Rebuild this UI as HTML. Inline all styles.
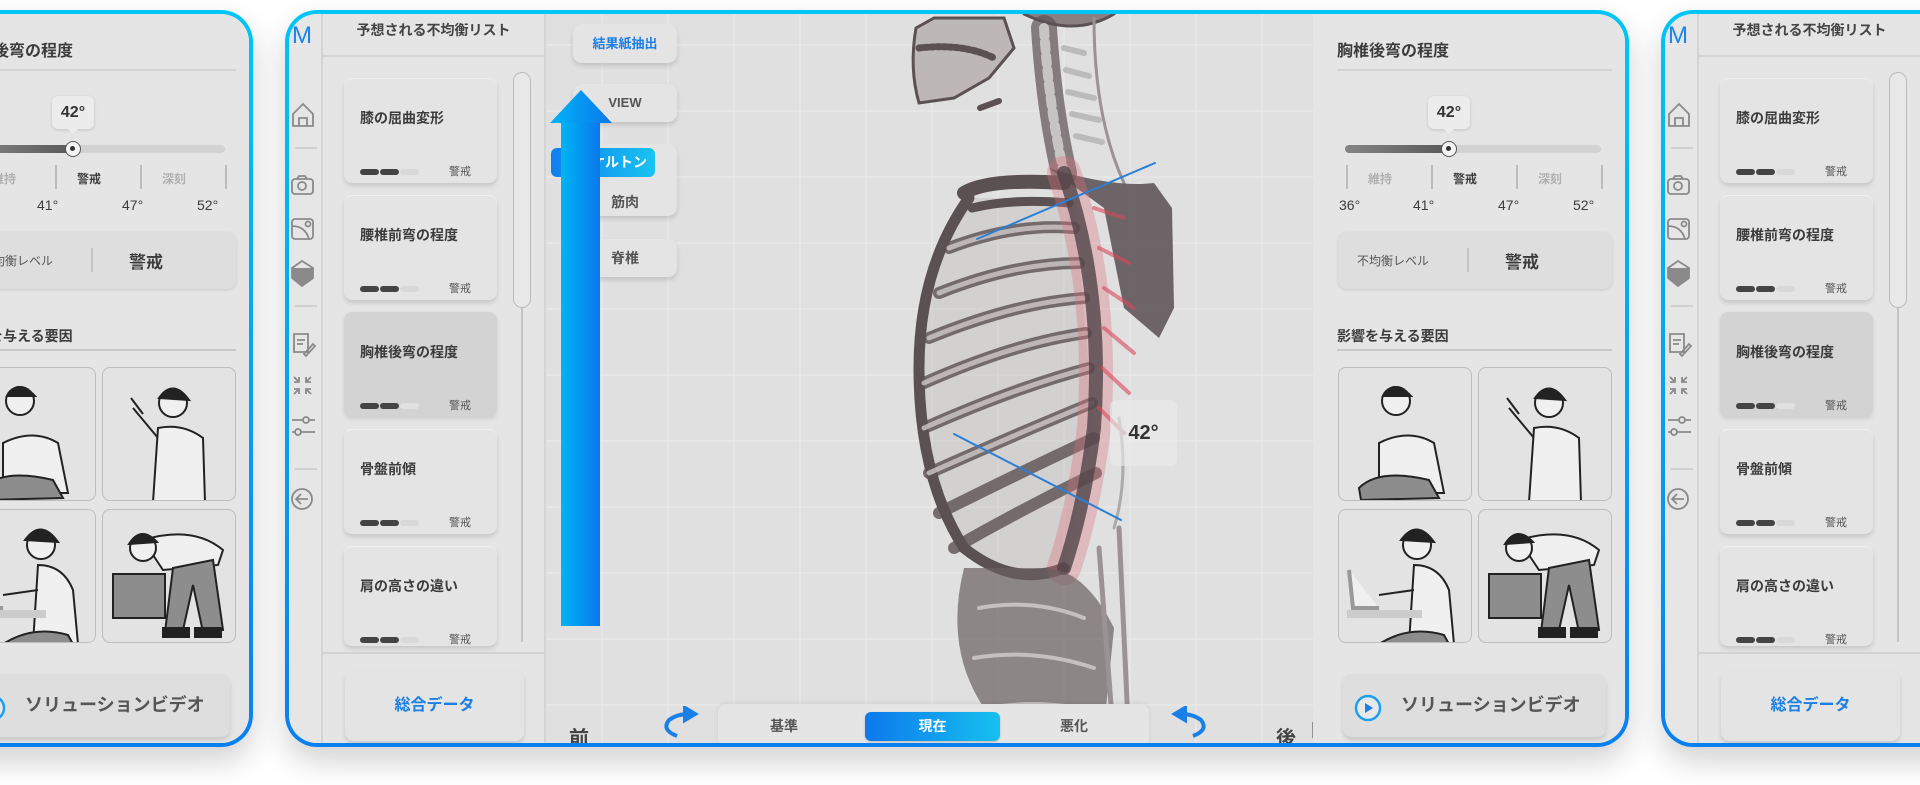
<!DOCTYPE html>
<html><head><meta charset="utf-8">
<style>
*{box-sizing:border-box;margin:0;padding:0}
html,body{width:1920px;height:785px;overflow:hidden;background:#fff;font-family:"Liberation Sans","Noto Sans CJK JP",sans-serif;color:#3a3a3a}
.pw{position:absolute;top:10px;width:1344px;height:737px;border-radius:32px;background:linear-gradient(180deg,#00c6f6,#0a7ff0);box-shadow:0 14px 30px rgba(0,0,0,.18)}
.pi{position:absolute;left:4px;top:4px;right:4px;bottom:4px;border-radius:28px;overflow:hidden;background:#e3e3e3}
.a{position:absolute}
.nav{left:0;top:0;width:34px;height:100%;background:#e6e6e6;border-right:2px solid #d4d4d4}
.list{left:34px;top:0;width:223px;height:100%;background:#e5e5e5;border-right:2px solid #d4d4d4}
.canvas{left:257px;top:0;width:767px;height:100%;background-color:#e0e0e0;
background-image:linear-gradient(90deg,rgba(232,232,232,.7) 2px,transparent 2px),linear-gradient(180deg,rgba(232,232,232,.7) 2px,transparent 2px);background-size:66px 66px;background-position:-11px 30px}
.side{left:1024px;top:0;width:320px;height:100%;background:#e5e5e5}
.card{position:absolute;left:21px;width:153px;height:105px;border-radius:8px;background:#e4e4e4;box-shadow:0 3px 5px rgba(0,0,0,.13),inset 0 1px 0 #efefef}
.card.sel{background:#d3d3d3;box-shadow:0 2px 4px rgba(0,0,0,.1)}
.card b{position:absolute;left:16px;top:30px;font-size:14px;font-weight:bold;color:#3c3c3c;white-space:nowrap}
.pill{position:absolute;height:6px;width:19px;border-radius:3px;background:#444;top:91px}
.card .st{position:absolute;right:26px;top:85px;font-size:11px;color:#555}
.btn{position:absolute;border-radius:9px;background:#e4e4e4;box-shadow:0 3px 5px rgba(0,0,0,.13);text-align:center;font-weight:bold}
.tx{position:absolute;white-space:nowrap}
.cell{position:absolute;width:134px;height:134px;border:1.5px solid #bdbdbd;border-radius:8px;background:#e3e3e3;overflow:hidden}
</style></head><body>

<div id="p" class="pw" style="left:285px"><div class="pi">
 <div class="a nav">
  <div class="tx" style="left:3px;top:8px;font-size:24px;color:#1a86e8;font-weight:normal;letter-spacing:-2px">M</div>
  <svg class="a" style="left:0;top:0" width="34" height="700" fill="none" stroke="#8a8a8a" stroke-width="1.8">
   <path d="M4 100 L14 90 L24 100 V112 H4 Z M10 112 V104 H18 V112"/>
   <line x1="6" y1="134" x2="28" y2="134" stroke="#ccc"/>
   <rect x="3" y="165" width="21" height="15" rx="3"/><circle cx="13" cy="172" r="4"/><path d="M8 165 l2 -3 h6 l2 3"/>
   <rect x="3" y="205" width="21" height="20" rx="3"/><path d="M3 212 Q16 212 20 225"/><circle cx="19" cy="210" r="2.5"/>
   <path d="M3 254 L13 247 L24 254 L13 262 Z"/><path d="M3 254 V264 L13 272 L24 264 V254" fill="#8a8a8a"/>
   <line x1="6" y1="292" x2="28" y2="292" stroke="#ccc"/>
   <path d="M5 320 H19 V338 H5 Z M8 326 H16 M8 330 H14 M15 340 L24 330 L26 332 L17 342 Z"/>
   <path d="M5 363 L10 368 M10 363 V368 H5 M22 363 L17 368 M17 363 V368 H22 M5 380 L10 375 M10 380 V375 H5 M22 380 L17 375 M17 380 V375 H22"/>
   <path d="M3 406 H26 M3 418 H26"/><circle cx="17" cy="406" r="3" fill="#e6e6e6"/><circle cx="9" cy="418" r="3" fill="#e6e6e6"/>
   <line x1="6" y1="455" x2="28" y2="455" stroke="#ccc"/>
   <circle cx="13" cy="485" r="10"/><path d="M19 485 H8 M12 480 L7 485 L12 490"/>
  </svg>
 </div>
 <div class="a list">
  <div class="tx" style="left:0;width:221px;text-align:center;top:6px;font-size:14px;font-weight:bold;color:#444">予想される不均衡リスト</div>
  <div class="a" style="left:0;top:41px;width:221px;height:2px;background:#d2d2d2"></div>
  <div class="card" style="top:64px"><b>膝の屈曲変形</b><i class="pill" style="left:16px"></i><i class="pill" style="left:36px"></i><i class="pill" style="left:56px;background:#d8d8d8"></i><span class="st">警戒</span></div>
  <div class="card" style="top:181px"><b>腰椎前弯の程度</b><i class="pill" style="left:16px"></i><i class="pill" style="left:36px"></i><i class="pill" style="left:56px;background:#d8d8d8"></i><span class="st">警戒</span></div>
  <div class="card sel" style="top:298px"><b>胸椎後弯の程度</b><i class="pill" style="left:16px"></i><i class="pill" style="left:36px"></i><i class="pill" style="left:56px;background:#e0e0e0"></i><span class="st">警戒</span></div>
  <div class="card" style="top:415px"><b>骨盤前傾</b><i class="pill" style="left:16px"></i><i class="pill" style="left:36px"></i><i class="pill" style="left:56px;background:#d8d8d8"></i><span class="st">警戒</span></div>
  <div class="card" style="top:532px;height:100px"><b>肩の高さの違い</b><i class="pill" style="left:16px"></i><i class="pill" style="left:36px"></i><i class="pill" style="left:56px;background:#d8d8d8"></i><span class="st">警戒</span></div>
  <div class="a" style="left:190px;top:58px;width:18px;height:236px;border:1.5px solid #bcbcbc;border-radius:9px;background:#e8e8e8"></div>
  <div class="a" style="left:198px;top:294px;width:2px;height:334px;background:#c4c4c4"></div>
  <div class="a" style="left:0;top:638px;width:221px;height:2px;background:#d2d2d2"></div>
  <div class="btn" style="left:22px;top:657px;width:179px;height:70px;line-height:70px;font-size:16px;color:#1a7fe6">総合データ</div>
 </div>
 <div class="a canvas">
  <svg class="a" style="left:0;top:0" width="767" height="730" viewBox="542 6 767 730">
   <g stroke-linecap="round" fill="none">
    <path d="M1020 6 Q1070 30 1110 6" fill="#8a8082" stroke="#5b5052" stroke-width="3"/>
    <path d="M912 20 L930 10 L1000 10 L1010 40 L985 70 L950 90 L915 95 Q905 60 912 20 Z" fill="#bdb7b7" stroke="#5b5052" stroke-width="3"/>
    <path d="M915 40 Q960 35 990 50" stroke="#5b5052" stroke-width="7" stroke-dasharray="3 3"/>
    <path d="M976 100 L995 93" stroke="#5b5052" stroke-width="6"/>
    <path d="M1090 10 Q1090 110 1120 175" stroke="#9a9294" stroke-width="3"/>
    <path d="M1040 20 Q1045 100 1060 165" stroke="#5b5052" stroke-width="26" opacity=".7"/>
    <path d="M1040 20 Q1045 100 1060 165" stroke="#c9c4c4" stroke-width="10" stroke-dasharray="8 6"/>
    <path d="M1060 40 L1080 45 M1062 62 L1085 68 M1064 84 L1090 90 M1068 106 L1095 112 M1072 128 L1098 134" stroke="#bbb" stroke-width="6"/>
    <path d="M965 190 Q915 260 915 360 Q915 470 960 540 Q1010 580 1060 560 L1090 420 L1070 190 Z" fill="#b9b3b3" opacity=".35"/>
    <path d="M1045 160 Q1110 180 1150 175 L1168 200 L1170 300 L1155 330 L1120 300 L1100 200 Z" fill="#4f4547" opacity=".8"/>
    <path d="M960 185 Q985 170 1060 175" stroke="#5b5052" stroke-width="14"/>
    <path d="M965 190 Q915 260 915 360 Q915 470 960 540 Q1010 580 1060 560" stroke="#5b5052" stroke-width="11"/>
    <path d="M968 200 Q1010 190 1065 195" stroke="#5b5052" stroke-width="9"/>
    <path d="M945 240 Q1010 215 1070 220 M935 285 Q1010 255 1075 255 M925 330 Q1010 295 1080 290 M920 375 Q1010 335 1082 325 M920 420 Q1010 380 1085 360 M925 465 Q1015 425 1088 395 M935 505 Q1015 465 1090 430 M950 540 Q1020 500 1092 465" stroke="#5b5052" stroke-width="12" opacity=".8"/>
    <path d="M945 240 Q1010 215 1070 220 M935 285 Q1010 255 1075 255 M925 330 Q1010 295 1080 290 M920 375 Q1010 335 1082 325 M920 420 Q1010 380 1085 360 M925 465 Q1015 425 1088 395" stroke="#d5d0d0" stroke-width="5" opacity=".75"/>
    <path d="M1060 165 Q1100 280 1090 420 Q1080 500 1060 560" stroke="#d9707a" stroke-width="34" opacity=".35"/>
    <path d="M1060 165 Q1100 280 1090 420 Q1080 500 1060 560" stroke="#4f4547" stroke-width="14" opacity=".8"/>
    <path d="M1090 200 L1120 210 M1095 240 L1125 255 M1100 280 L1130 300 M1100 320 L1130 345 M1098 360 L1125 385 M1095 400 L1120 425" stroke="#d9475a" stroke-width="4" opacity=".6"/>
    <path d="M1115 410 Q1125 470 1110 520" stroke="#aaa" stroke-width="3"/>
    <path d="M960 560 Q940 640 980 700 Q1040 740 1100 720 L1110 620 Q1080 560 1040 560 Z" fill="#6a5f61" opacity=".7"/>
    <path d="M975 600 Q1030 590 1080 610 M970 650 Q1030 640 1090 660 M985 700 Q1040 690 1095 705" stroke="#c5c0c0" stroke-width="4"/>
    <path d="M1095 540 L1110 736 M1115 520 L1125 736" stroke="#9a9294" stroke-width="5"/>
    <line x1="973" y1="231" x2="1151" y2="155" stroke="#2a7fd8" stroke-width="2"/>
    <line x1="950" y1="426" x2="1117" y2="512" stroke="#2a7fd8" stroke-width="2"/>
   </g>
  </svg>
  <div class="a" style="left:564px;top:386px;width:67px;height:66px;border-radius:6px;background:rgba(235,235,235,.6)"></div>
  <div class="tx" style="left:564px;top:408px;width:67px;text-align:center;font-size:20px;font-weight:bold;color:#333">42°</div>
  <div class="btn" style="left:27px;top:10px;width:104px;height:39px;line-height:39px;font-size:13px;color:#1a7fe6">結果紙抽出</div>
  <div class="btn" style="left:27px;top:70px;width:104px;height:38px;line-height:38px;font-size:13px;color:#555">VIEW</div>
  <div class="btn" style="left:27px;top:130px;width:104px;height:72px"></div>
  <div class="a" style="left:5px;top:134px;width:104px;height:29px;border-radius:6px;background:linear-gradient(90deg,#0f7ff0,#19c3f0);color:#fff;font-size:14px;font-weight:bold;line-height:29px;text-align:right;padding-right:8px">スケルトン</div>
  <div class="tx" style="left:27px;width:104px;text-align:center;top:178px;font-size:14px;font-weight:bold;color:#555">筋肉</div>
  <div class="btn" style="left:27px;top:225px;width:104px;height:38px;line-height:38px;font-size:14px;color:#555">脊椎</div>
  <div class="a" style="left:15px;top:109px;width:39px;height:503px;background:linear-gradient(90deg,#00b4f6,#0a78ec)"></div>
  <svg class="a" style="left:4px;top:76px" width="62" height="34"><polygon points="0,33 31,0 62,33" fill="url(#g1)"/><defs><linearGradient id="g1"><stop offset="0" stop-color="#00b4f6"/><stop offset="1" stop-color="#0a78ec"/></linearGradient></defs></svg>
  <div class="tx" style="left:23px;top:708px;font-size:20px;font-weight:bold;color:#444">前</div>
  <div class="tx" style="left:730px;top:708px;font-size:20px;font-weight:bold;color:#444">後</div>
  <svg class="a" style="left:115px;top:692px" width="40" height="34" fill="none" stroke="#1a7fe6" stroke-width="4"><path d="M16 30 Q0 24 8 14 Q16 8 28 8"/><path d="M24 2 L34 8 L24 14 Z" fill="#1a7fe6"/></svg>
  <svg class="a" style="left:623px;top:692px" width="40" height="34" fill="none" stroke="#1a7fe6" stroke-width="4"><path d="M24 30 Q40 24 32 14 Q24 8 12 8"/><path d="M16 2 L6 8 L16 14 Z" fill="#1a7fe6"/></svg>
  <div class="a" style="left:172px;top:690px;width:431px;height:44px;border-radius:9px;background:#e5e5e5;box-shadow:0 -1px 4px rgba(0,0,0,.08)"></div>
  <div class="tx" style="left:210px;width:56px;text-align:center;top:702px;font-size:14px;font-weight:bold;color:#555">基準</div>
  <div class="a" style="left:319px;top:698px;width:135px;height:29px;border-radius:6px;background:linear-gradient(90deg,#0d79ec,#16c0ef);box-shadow:0 1px 2px rgba(0,0,0,.2);color:#fff;font-size:14px;font-weight:bold;text-align:center;line-height:29px">現在</div>
  <div class="tx" style="left:500px;width:56px;text-align:center;top:702px;font-size:14px;font-weight:bold;color:#555">悪化</div>
  <svg class="a" style="left:765px;top:708px" width="14" height="20"><path d="M2 1 L2 15 L5 12 L8 18 L10 17 L7 11 L11 11 Z" fill="#fff" stroke="#444" stroke-width="1"/></svg>
 </div>
 <div class="a side">
  <div class="tx" style="left:24px;top:23px;font-size:16px;font-weight:bold;color:#3c3c3c">胸椎後弯の程度</div>
  <div class="a" style="left:24px;top:55px;width:275px;height:2px;background:#d2d2d2"></div>
  <div class="a" style="left:115px;top:82px;width:42px;height:33px;border-radius:6px;background:#ececec;box-shadow:0 1px 3px rgba(0,0,0,.15);text-align:center;line-height:33px;font-size:16px;font-weight:bold;color:#333">42°</div>
  <div class="a" style="left:130px;top:114px;width:0;height:0;border-left:6px solid transparent;border-right:6px solid transparent;border-top:6px solid #ececec"></div>
  <div class="a" style="left:32px;top:131px;width:256px;height:8px;border-radius:4px;background:linear-gradient(90deg,#858585 0,#5a5a5a 40%,#d2d2d2 40%)"></div>
  <div class="a" style="left:128px;top:127px;width:16px;height:16px;border-radius:50%;background:#f3f3f3;border:1.5px solid #555"><i style="position:absolute;left:4px;top:4px;width:5px;height:5px;border-radius:50%;background:#333"></i></div>
  <div class="a" style="left:33px;top:151px;width:2px;height:24px;background:#bbb"></div>
  <div class="a" style="left:118px;top:151px;width:2px;height:24px;background:#bbb"></div>
  <div class="a" style="left:203px;top:151px;width:2px;height:24px;background:#bbb"></div>
  <div class="a" style="left:288px;top:151px;width:2px;height:24px;background:#bbb"></div>
  <div class="tx" style="left:55px;top:156px;font-size:12px;color:#b0b0b0;font-weight:bold">維持</div>
  <div class="tx" style="left:140px;top:156px;font-size:12px;color:#3c3c3c;font-weight:bold">警戒</div>
  <div class="tx" style="left:225px;top:156px;font-size:12px;color:#b0b0b0;font-weight:bold">深刻</div>
  <div class="tx" style="left:26px;top:183px;font-size:14px;color:#3c3c3c">36°</div>
  <div class="tx" style="left:100px;top:183px;font-size:14px;color:#3c3c3c">41°</div>
  <div class="tx" style="left:185px;top:183px;font-size:14px;color:#3c3c3c">47°</div>
  <div class="tx" style="left:260px;top:183px;font-size:14px;color:#3c3c3c">52°</div>
  <div class="a" style="left:25px;top:218px;width:274px;height:57px;border-radius:9px;background:#dedede;box-shadow:0 1px 3px rgba(0,0,0,.12)"></div>
  <div class="tx" style="left:44px;top:238px;font-size:12px;color:#555">不均衡レベル</div>
  <div class="a" style="left:154px;top:234px;width:2px;height:24px;background:#c4c4c4"></div>
  <div class="tx" style="left:192px;top:234px;font-size:17px;font-weight:bold;color:#3c3c3c">警戒</div>
  <div class="tx" style="left:24px;top:312px;font-size:14px;font-weight:bold;color:#3c3c3c">影響を与える要因</div>
  <div class="a" style="left:24px;top:335px;width:275px;height:2px;background:#c8c8c8"></div>
  <div class="cell" style="left:25px;top:353px"><svg width="134" height="134" fill="#f0f0f0" stroke="#222" stroke-width="2"><path d="M40 75 Q70 60 95 75 L105 125 L40 125 Z"/><path d="M20 120 Q40 100 90 112 L100 130 L22 132 Z" fill="#8d8d8d"/><circle cx="57" cy="33" r="14"/><path d="M44 28 Q55 10 72 28 Z" fill="#222"/></svg></div>
  <div class="cell" style="left:165px;top:353px"><svg width="134" height="134" fill="#f0f0f0" stroke="#222" stroke-width="2"><path d="M55 60 Q80 55 100 70 L102 134 L50 134 Z"/><path d="M55 70 L30 40 M28 30 L40 46" /><circle cx="70" cy="35" r="14"/><path d="M56 30 Q70 10 86 32 Z" fill="#222"/></svg></div>
  <div class="cell" style="left:25px;top:495px"><svg width="134" height="134" fill="#f0f0f0" stroke="#222" stroke-width="2"><path d="M75 55 Q100 55 110 80 L115 134 L70 134 Z"/><path d="M75 80 L40 85"/><rect x="8" y="100" width="75" height="8" fill="#ccc" stroke="none"/><path d="M10 60 L14 98 H40" stroke="#999" stroke-width="4"/><circle cx="78" cy="35" r="14"/><path d="M62 30 Q78 8 95 32 Z" fill="#222"/><path d="M40 134 Q70 115 105 125 L110 134 Z" fill="#8d8d8d"/></svg></div>
  <div class="cell" style="left:165px;top:495px"><svg width="134" height="134" fill="#f0f0f0" stroke="#222" stroke-width="2"><path d="M40 30 Q90 15 120 40 L115 55 L60 60 Z"/><rect x="10" y="64" width="52" height="44" fill="#8d8d8d"/><path d="M70 58 L110 50 L120 120 L100 122 L90 75 L80 120 L62 122 Z" fill="#8d8d8d"/><rect x="60" y="118" width="26" height="9" fill="#222"/><rect x="92" y="118" width="26" height="9" fill="#222"/><circle cx="40" cy="38" r="13"/><path d="M26 34 Q38 15 54 32 Z" fill="#222"/></svg></div>
  <div class="btn" style="left:30px;top:660px;width:263px;height:63px;background:#dedede;font-size:18px;color:#555;line-height:63px;text-align:left;padding-left:58px">ソリューションビデオ</div>
  <svg class="a" style="left:40px;top:679px" width="30" height="30"><circle cx="15" cy="15" r="12" fill="#e8e8e8" stroke="#1aa0ec" stroke-width="2.5"/><path d="M12 10 L20 15 L12 20 Z" fill="#1a7fe6"/></svg>
 </div>
</div></div>

<script>
var p=document.getElementById('p');
[-1091,1661].forEach(function(x){var c=p.cloneNode(true);c.removeAttribute('id');c.style.left=x+'px';document.body.appendChild(c);});
</script>
</body></html>
